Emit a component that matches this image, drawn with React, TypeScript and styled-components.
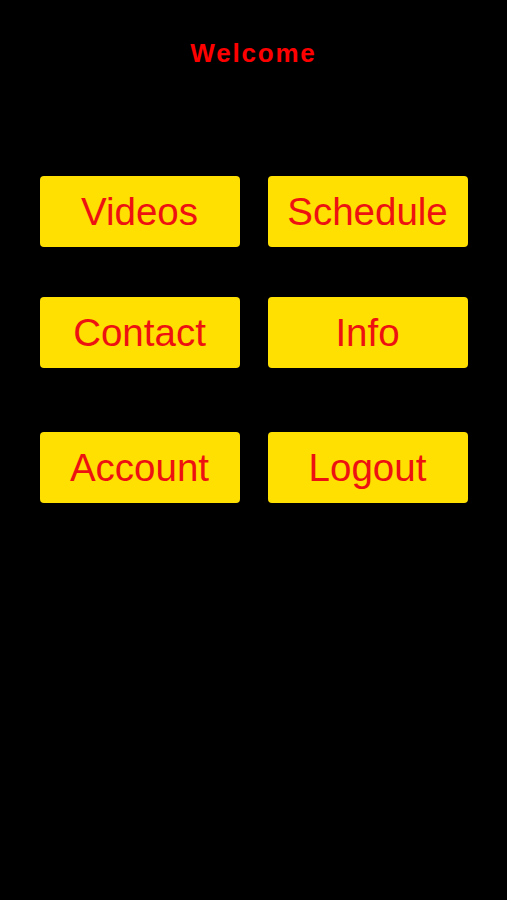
import styled, { createGlobalStyle } from "styled-components";

const GlobalStyle = createGlobalStyle`
  html, body {
    margin: 0;
    padding: 0;
    background: #000;
  }
  body {
    font-family: "Liberation Sans", Arial, sans-serif;
  }
`;

const Screen = styled.div`
  width: 507px;
  min-height: 900px;
  background: #000;
  display: flex;
  flex-direction: column;
  align-items: center;
`;

const Title = styled.h1`
  margin: 38px 0 0;
  font-size: 26px;
  line-height: 30px;
  font-weight: 700;
  letter-spacing: 1.8px;
  color: #ff0000;
`;

const Menu = styled.div`
  margin-top: 108px;
  display: flex;
  flex-direction: column;
`;

const Row = styled.div<{ $top?: number }>`
  display: flex;
  gap: 28px;
  margin-top: ${(props) => props.$top ?? 0}px;
`;

const MenuButton = styled.button`
  width: 200px;
  height: 71px;
  padding: 0;
  border: none;
  border-radius: 4px;
  background: #ffe000;
  color: #ee1111;
  font-family: "Liberation Sans", Arial, sans-serif;
  font-size: 38.5px;
  cursor: pointer;
`;

const rows = [
  { top: 0, items: ["Videos", "Schedule"] },
  { top: 50, items: ["Contact", "Info"] },
  { top: 64, items: ["Account", "Logout"] },
];

function App() {
  return (
    <>
      <GlobalStyle />
      <Screen>
        <Title>Welcome</Title>
        <Menu>
          {rows.map((row) => (
            <Row key={row.items.join("-")} $top={row.top}>
              {row.items.map((label) => (
                <MenuButton key={label}>{label}</MenuButton>
              ))}
            </Row>
          ))}
        </Menu>
      </Screen>
    </>
  );
}

export default App;
